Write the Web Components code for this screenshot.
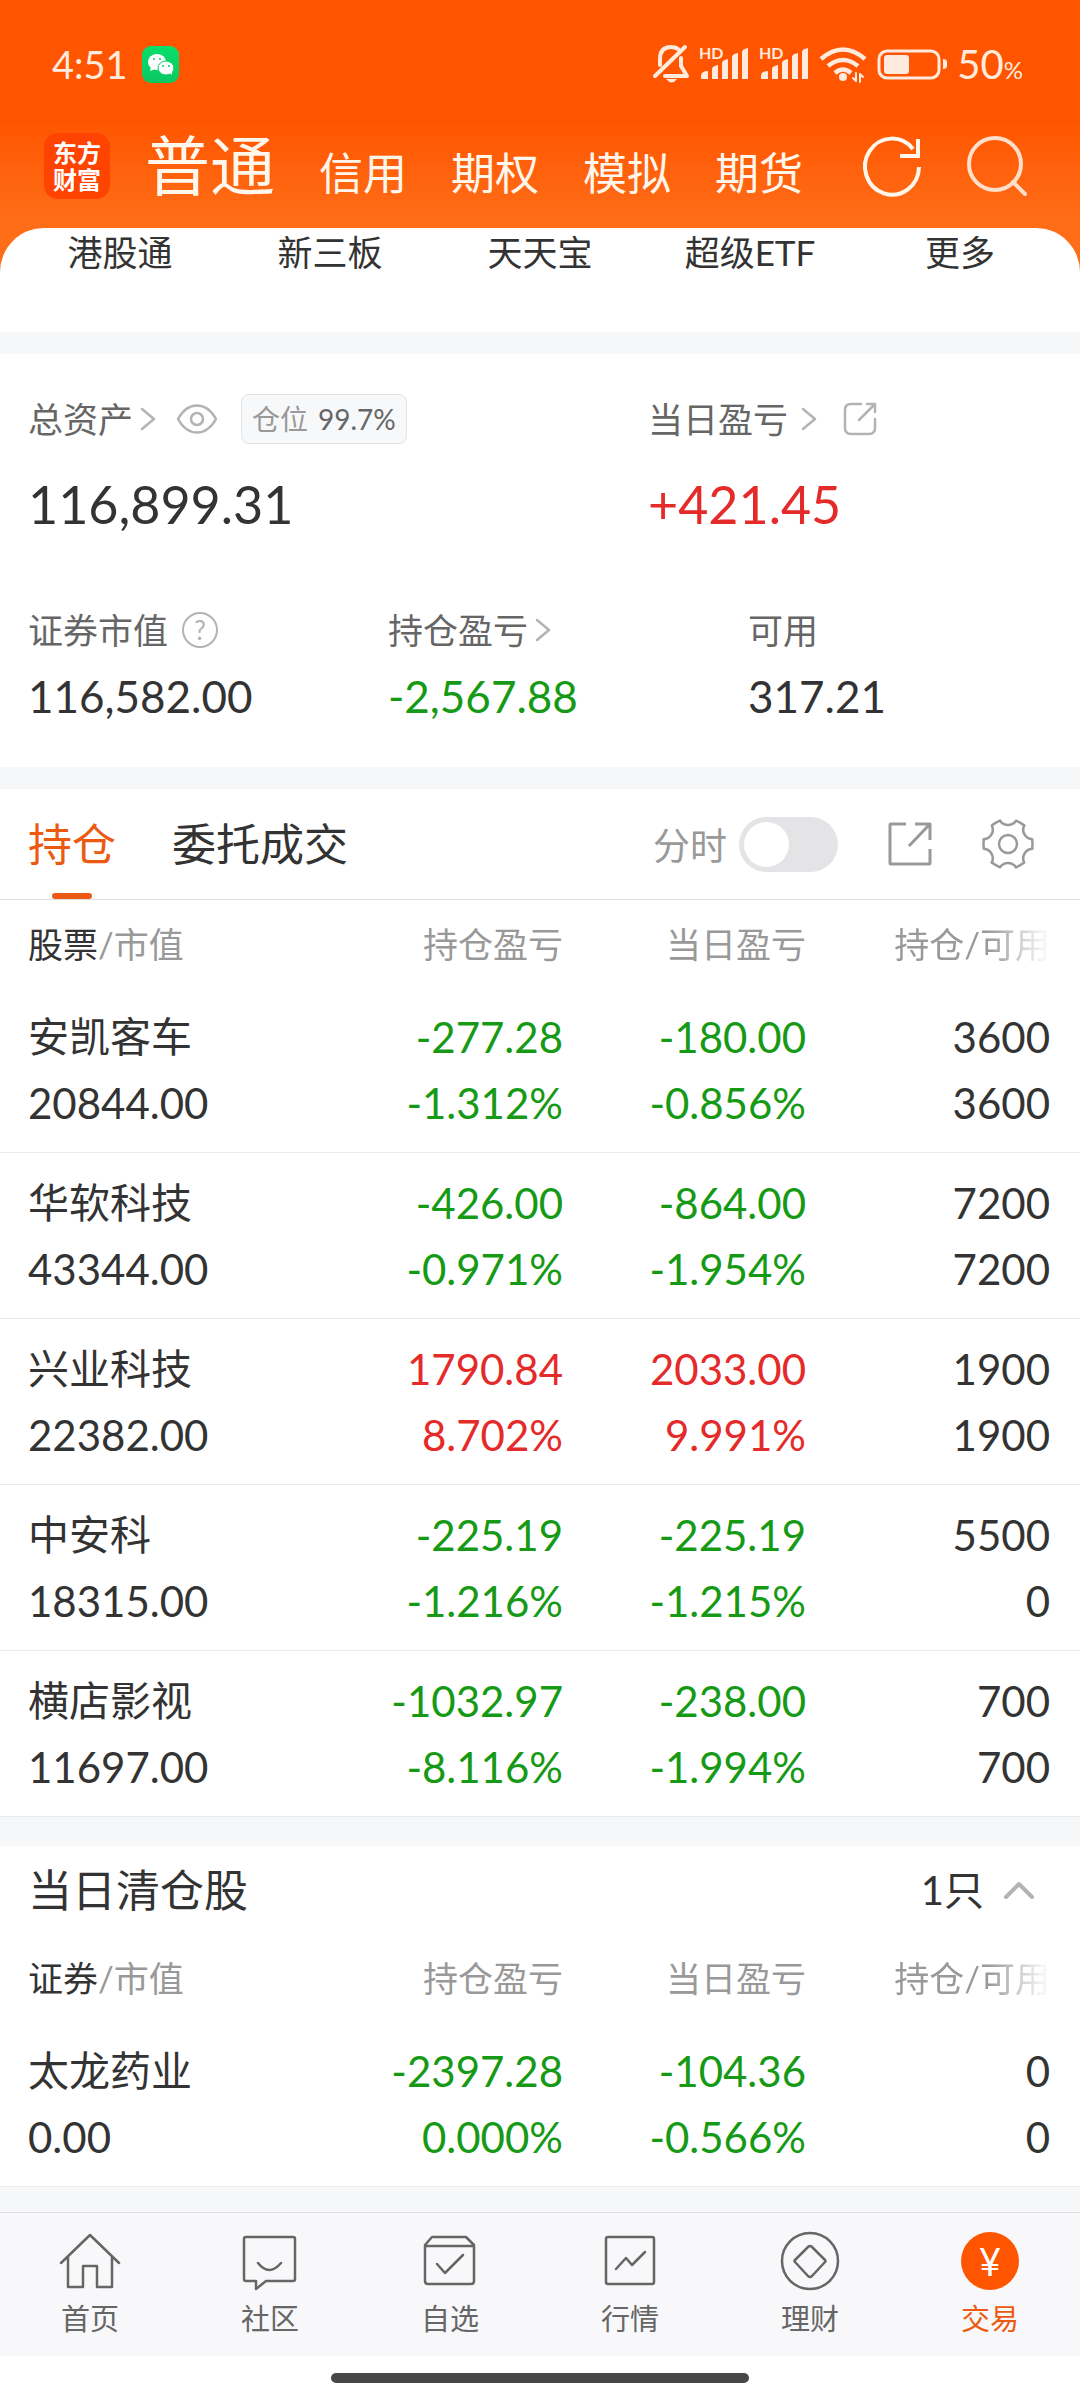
<!DOCTYPE html>
<html lang="zh-CN">
<head>
  <meta charset="utf-8">
  <meta name="viewport" content="width=device-width, initial-scale=1">
  <title>交易</title>
  <style>
    body {
      margin: 0;
      font-family: Lato, "Noto Sans CJK SC", sans-serif;
      color: #333;
      background: #fff;
    }

    trade-page {
      --band: #f6f7f9;
      --muted: #999;
      --label: #666;
      --up: #e52a2a;
      --down: #169a16;
      --accent: #eb5a10;
    }
  </style>
</head>
<body>
  <trade-page>
    <app-header slot="header">
      <status-bar time="4:51" battery="50"></status-bar>
    </app-header>
    <quick-links slot="header">
      <a href="#ggt">港股通</a>
      <a href="#xsb">新三板</a>
      <a href="#ttb">天天宝</a>
      <a href="#etf">超级ETF</a>
      <a href="#more">更多</a>
    </quick-links>
    <asset-summary></asset-summary>
    <section>
      <holding-tabs></holding-tabs>
      <holding-table id="holdings" label="股票"></holding-table>
    </section>
    <cleared-panel count="1">
      <holding-table id="cleared" label="证券"></holding-table>
    </cleared-panel>
    <bottom-nav slot="footer">
      <nav-item icon="home">首页</nav-item>
      <nav-item icon="community">社区</nav-item>
      <nav-item icon="watchlist">自选</nav-item>
      <nav-item icon="market">行情</nav-item>
      <nav-item icon="wealth">理财</nav-item>
      <nav-item icon="trade" active>交易</nav-item>
    </bottom-nav>
  </trade-page>

  <script>
    const gearTooth = [0, 60, 120, 180, 240, 300]
      .map(a => `<path transform="rotate(${a})" d="M-8 -23.3C-4 -17.6 4 -17.6 8 -23.3Q12.5 -21.5 16.2 -18.6"/>`)
      .join('');

    const signal = `<g fill="currentColor" stroke="none">
      <text x="0" y="12" font-size="16" font-weight="700">HD</text>
      <path d="M2 32v-3q0-5 7-5v8zM13 32V22q0-3 6-4v14zM23 32V16q0-3 6-4v20zM33 32V10q0-3 6-4v26zM43 32V5q0-3 6-4v31z"/></g>`;

    // [width, height, stroke width, shapes]
    const ICONS = {
      chevron: [14, 22, 2.5, '<path d="M1 1l12 10L1 21"/>'],
      up: [30, 18, 4, '<path d="M2 16L15 3l13 13"/>'],
      eye: [42, 30, 2.5, '<path d="M2 15C12-3 30-3 40 15C30 33 12 33 2 15z"/><circle cx="21" cy="15" r="6"/>'],
      export: [32, 32, 2.5, '<path d="M17 1H7Q1 1 1 7v18q0 6 6 6h18q6 0 6-6V16M15 17L30 2M23 1h8v8"/>'],
      share: [44, 44, 3, '<path d="M18 2H3q-1 0-1 1v38q0 1 1 1h38q1 0 1-1V27M21 24L41 3M27 2h15v16" stroke-linecap="butt"/>'],
      gear: [52, 52, 2.5, `<g transform="translate(26 26)">${gearTooth}<circle r="9"/></g>`],
      refresh: [60, 60, 4, '<path d="M57 31A27 28 0 1 1 51 13M56 3v17H38" stroke-linecap="butt" stroke-linejoin="miter"/>'],
      search: [60, 60, 4, '<circle cx="29" cy="28" r="26"/><path d="M47 46l12 12"/>'],
      mute: [36, 38, 4, '<path d="M2 31L32 2M7 20v-6C7 6 11 2 18 2q4 0 7 2M28 13v8l6 10H12"/><path d="M13 34h11q-5 7-11 0z" fill="currentColor" stroke="none"/>'],
      signal: [50, 34, 1, signal],
      wifi: [48, 37, 4.5, '<path d="M2 13Q24-6 46 13M9 20Q24 8 39 20M16 27Q24 20 32 27" stroke-linecap="butt"/><circle cx="24" cy="31" r="4" fill="currentColor" stroke="none"/><path d="M37 27v8l-3-3M41 36v-8l3 3" stroke-width="2"/>'],
      battery: [70, 30, 3, '<rect x="2" y="2" width="60" height="27" rx="8"/><g fill="currentColor" stroke="none"><rect x="7" y="6" width="25" height="19" rx="3"/><path d="M66 10q4 0 4 3v4q0 3-4 3z"/></g>'],
      wechat: [37, 37, 0, '<defs><linearGradient id="g" x2="0" y2="1"><stop stop-color="#08df6b"/><stop offset="1" stop-color="#0ac862"/></linearGradient></defs><rect width="37" height="37" rx="9" fill="url(#g)"/><g fill="#fff"><ellipse cx="15" cy="16" rx="9" ry="8"/><path d="M9 21l-1 4 5-2z"/><ellipse cx="24" cy="22" rx="8" ry="7" stroke="#09d266" stroke-width="1"/><path d="M27 26l3 3v-5z"/></g><g fill="#09d266"><circle cx="12" cy="13" r="1"/><circle cx="18" cy="13" r="1"/><circle cx="21" cy="20" r="1"/><circle cx="27" cy="20" r="1"/></g>'],
      home: [60, 60, 2.5, '<path d="M1 32L30 4l29 28M8 26v30h15V35h14v21h15V26"/>'],
      community: [60, 60, 2.5, '<path d="M6 6h47q2 0 2 2v40q0 2-2 2H26l-10 8v-8H6q-2 0-2-2V8q0-2 2-2zM18 32q11 14 23 0"/>'],
      watchlist: [60, 60, 2.5, '<path d="M5 14l7-8h34l8 8v36q0 3-3 3H8q-3 0-3-3zM5 15h49M17 33l8 9 18-18"/>'],
      market: [60, 60, 2.5, '<rect x="6" y="6" width="48" height="47" rx="2"/><path d="M16 38l10-11 6 7 13-13"/>'],
      wealth: [60, 60, 2.5, '<circle cx="30" cy="30" r="28"/><path d="M28 16q2-2 4 0l13 13q1 1 0 2L32 45q-2 2-4 0L15 31q-1-1 0-2z"/>'],
      trade: [60, 60, 0, '<circle cx="30" cy="30" r="29" fill="#f50"/><text x="30" y="45" text-anchor="middle" font-size="38" fill="#fff">¥</text>']
    };

    class UiIcon extends HTMLElement {
      connectedCallback() {
        const [w, h, stroke, shapes] = ICONS[this.getAttribute('name')];
        this.attachShadow({mode: 'open'}).innerHTML = `
          <style>
            :host {
              display: block;
              flex: none;
            }

            svg {
              display: block;
              overflow: visible;
            }
          </style>
          <svg width="${w}" height="${h}" viewBox="0 0 ${w} ${h}" fill="none" stroke="${stroke ? 'currentColor' : 'none'}"
            stroke-width="${stroke}" stroke-linecap="round" stroke-linejoin="round" aria-hidden="true">${shapes}</svg>
        `;
      }
    }

    class TradePage extends HTMLElement {
      connectedCallback() {
        this.attachShadow({mode: 'open'}).innerHTML = `
          <style>
            :host {
              display: flex;
              flex-direction: column;
              min-height: 100vh;
            }

            header {
              background: linear-gradient(#f50 120px, #ff6d18 220px);
            }

            main {
              flex: 1;
              display: flex;
              flex-direction: column;
              gap: 22px;
              padding: 22px 0 24px;
              background: var(--band);
            }

            ::slotted(section) {
              background: #fff;
            }
          </style>
          <header><slot name="header"></slot></header>
          <main><slot></slot></main>
          <slot name="footer"></slot>
        `;
      }
    }

    class StatusBar extends HTMLElement {
      connectedCallback() {
        this.attachShadow({mode: 'open'}).innerHTML = `
          <style>
            :host {
              display: flex;
              align-items: center;
              gap: 14px;
              height: 128px;
              padding: 0 57px 0 52px;
              color: #ffeade;
              font-size: 38px;
            }

            .icons {
              display: flex;
              align-items: center;
              gap: 10px;
              margin-left: auto;
              font-size: 40px;
            }

            small {
              font-size: 24px;
            }
          </style>
          <span>${this.getAttribute('time')}</span>
          <ui-icon name="wechat"></ui-icon>
          <div class="icons">
            <ui-icon name="mute"></ui-icon>
            <ui-icon name="signal"></ui-icon>
            <ui-icon name="signal"></ui-icon>
            <ui-icon name="wifi"></ui-icon>
            <ui-icon name="battery"></ui-icon>
            <span>${this.getAttribute('battery')}<small>%</small></span>
          </div>
        `;
      }
    }

    class AppHeader extends HTMLElement {
      connectedCallback() {
        this.attachShadow({mode: 'open'}).innerHTML = `
          <style>
            :host {
              display: block;
              color: #fff6ec;
            }

            .bar {
              display: flex;
              align-items: center;
              height: 76px;
              padding: 0 54px 24px 44px;
            }

            .logo {
              width: 66px;
              padding: 6px 0;
              border-radius: 14px;
              background: #ff4300;
              color: #fff;
              font-size: 24px;
              font-weight: 700;
              line-height: 27px;
              text-align: center;
            }

            nav {
              display: flex;
              align-items: baseline;
              gap: 44px;
              margin-left: 35px;
              padding-top: 6px;
              font-size: 44px;
              line-height: 76px;
              white-space: nowrap;
            }

            a {
              color: inherit;
              text-decoration: none;
            }

            a[aria-current] {
              font-size: 65px;
            }

            .actions {
              display: flex;
              gap: 44px;
              margin-left: auto;
            }

            button {
              padding: 0;
              border: 0;
              background: none;
              color: inherit;
            }

            .search {
              color: #ffdfc9;
            }
          </style>
          <slot></slot>
          <div class="bar">
            <div class="logo">东方<br>财富</div>
            <nav>
              <a href="#normal" aria-current="page">普通</a>
              <a href="#margin">信用</a>
              <a href="#options">期权</a>
              <a href="#paper">模拟</a>
              <a href="#futures">期货</a>
            </nav>
            <div class="actions">
              <button aria-label="刷新"><ui-icon name="refresh"></ui-icon></button>
              <button class="search" aria-label="搜索"><ui-icon name="search"></ui-icon></button>
            </div>
          </div>
        `;
      }
    }

    class QuickLinks extends HTMLElement {
      connectedCallback() {
        this.attachShadow({mode: 'open'}).innerHTML = `
          <style>
            :host {
              display: grid;
              grid-template-columns: repeat(5, 1fr);
              padding: 0 15px 56px;
              border-radius: 44px 44px 0 0;
              background: #fff;
              font-size: 35px;
              line-height: 48px;
              text-align: center;
            }

            ::slotted(a) {
              color: #333;
              text-decoration: none;
            }
          </style>
          <slot></slot>
        `;
      }
    }

    class AssetSummary extends HTMLElement {
      connectedCallback() {
        this.attachShadow({mode: 'open'}).innerHTML = `
          <style>
            :host {
              display: block;
              padding: 40px 0 38px;
              background: #fff;
            }

            dl {
              display: grid;
              margin: 0;
            }

            .total {
              grid-template-columns: 62fr 46fr;
              margin-bottom: 61px;
            }

            .detail {
              grid-template-columns: repeat(3, 1fr);
            }

            dl > div {
              padding-left: 28px;
            }

            dt {
              display: flex;
              align-items: center;
              gap: 8px;
              height: 50px;
              color: var(--label);
              font-size: 35px;
              line-height: 48px;
              white-space: nowrap;
            }

            dt.wide {
              gap: 14px;
            }

            dd {
              margin: 8px 0 0;
              font-size: 44px;
              line-height: 66px;
            }

            .total dd {
              margin-top: 20px;
              font-size: 52px;
              line-height: 80px;
            }

            .up {
              color: var(--up);
            }

            .down {
              color: var(--down);
            }

            ui-icon {
              color: #b3b3b3;
            }

            button {
              padding: 0;
              border: 0;
              background: none;
              font: inherit;
            }

            .eye {
              margin: 0 15px 0 13px;
            }

            .export {
              margin-left: 14px;
            }

            .help {
              width: 36px;
              height: 36px;
              border: 2px solid #b3b3b3;
              border-radius: 50%;
              color: #b3b3b3;
              font-size: 26px;
              line-height: 32px;
            }

            .badge {
              display: flex;
              gap: 10px;
              padding: 0 10px;
              border: 1px solid #e3e3e6;
              border-radius: 8px;
              background: #f7f8fa;
              font-size: 28px;
              line-height: 48px;
            }

            .badge span {
              color: var(--muted);
            }
          </style>
          <dl class="total">
            <div>
              <dt>总资产<ui-icon name="chevron"></ui-icon>
                <button class="eye" aria-label="隐藏金额"><ui-icon name="eye"></ui-icon></button>
                <div class="badge"><span>仓位</span>99.7%</div>
              </dt>
              <dd>116,899.31</dd>
            </div>
            <div>
              <dt class="wide">当日盈亏<ui-icon name="chevron"></ui-icon>
                <button class="export" aria-label="分享"><ui-icon name="export"></ui-icon></button>
              </dt>
              <dd class="up">+421.45</dd>
            </div>
          </dl>
          <dl class="detail">
            <div>
              <dt class="wide">证券市值<button class="help" aria-label="说明">?</button></dt>
              <dd>116,582.00</dd>
            </div>
            <div>
              <dt>持仓盈亏<ui-icon name="chevron"></ui-icon></dt>
              <dd class="down">-2,567.88</dd>
            </div>
            <div>
              <dt>可用</dt>
              <dd>317.21</dd>
            </div>
          </dl>
        `;
      }
    }

    class HoldingTabs extends HTMLElement {
      connectedCallback() {
        this.attachShadow({mode: 'open'}).innerHTML = `
          <style>
            :host {
              display: flex;
              align-items: center;
              gap: 56px;
              height: 110px;
              padding: 0 46px 0 28px;
              border-bottom: 1px solid #dedede;
              color: var(--muted);
            }

            button {
              padding: 0;
              border: 0;
              background: none;
              color: inherit;
              font: inherit;
            }

            .tab {
              height: 110px;
              color: #333;
              font-size: 44px;
              line-height: 108px;
              white-space: nowrap;
            }

            /* the marker sits over the bottom edge of the tab */
            .tab[aria-selected="true"] {
              position: relative;
              color: var(--accent);
            }

            .tab[aria-selected="true"]::after {
              content: "";
              position: absolute;
              bottom: 0;
              left: 24px;
              right: 24px;
              height: 6px;
              border-radius: 3px;
              background: var(--accent);
            }

            .tools {
              display: flex;
              align-items: center;
              gap: 50px;
              margin-left: auto;
            }

            label {
              display: flex;
              align-items: center;
              gap: 12px;
              font-size: 37px;
            }

            input {
              appearance: none;
              width: 99px;
              height: 55px;
              margin: 0;
              padding: 5px;
              border-radius: 28px;
              background: #e4e4e6;
            }

            input::before {
              content: "";
              display: block;
              width: 45px;
              height: 45px;
              border-radius: 50%;
              background: #fff;
            }

            input:checked {
              background: var(--accent);
            }

            input:checked::before {
              margin-left: auto;
            }
          </style>
          <button class="tab" role="tab" aria-selected="true">持仓</button>
          <button class="tab" role="tab" aria-selected="false">委托成交</button>
          <div class="tools">
            <label>分时<input type="checkbox" role="switch"></label>
            <button aria-label="分享"><ui-icon name="share"></ui-icon></button>
            <button aria-label="设置"><ui-icon name="gear"></ui-icon></button>
          </div>
        `;
      }
    }

    class HoldingTable extends HTMLElement {
      constructor() {
        super();
        this.attachShadow({mode: 'open'});
        this._rows = [];
      }

      connectedCallback() {
        this.render();
      }

      set rows(rows) {
        this._rows = rows;
        this.render();
      }

      row([name, value, profit, rate, dayProfit, dayRate, held, usable]) {
        const trend = v => v.startsWith('-') || v === '0.000%' ? 'down' : 'up';
        return `
          <tr>
            <th scope="row"><div class="name">${name}</div>${value}</th>
            <td class="${trend(rate)}">${profit}<br>${rate}</td>
            <td class="${trend(dayRate)}">${dayProfit}<br>${dayRate}</td>
            <td>${held}<br>${usable}</td>
          </tr>`;
      }

      render() {
        this.shadowRoot.innerHTML = `
          <style>
            :host {
              display: block;
              background: #fff;
            }

            table {
              width: 100%;
              table-layout: fixed;
              border-collapse: separate;
              border-spacing: 0;
            }

            th,
            td {
              padding: 0;
              font-weight: 400;
              text-align: right;
              white-space: nowrap;
            }

            thead th {
              height: 87px;
              color: var(--muted);
              font-size: 35px;
              line-height: 48px;
            }

            thead b {
              color: #333;
              font-weight: 400;
            }

            tbody th,
            tbody td {
              padding: 17px 0 16px;
              border-bottom: 1px solid #ebebeb;
              font-size: 42px;
              line-height: 66px;
            }

            th:first-child {
              padding-left: 28px;
              text-align: left;
            }

            th:last-child,
            td:last-child {
              padding-right: 30px;
            }

            .value {
              width: 243px;
            }

            .amount {
              width: 274px;
            }

            .name {
              font-size: 41px;
            }

            .fade {
              -webkit-mask-image: linear-gradient(to right, #000 60%, rgba(0, 0, 0, .1) 95%);
              mask-image: linear-gradient(to right, #000 60%, rgba(0, 0, 0, .1) 95%);
            }

            .up {
              color: var(--up);
            }

            .down {
              color: var(--down);
            }
          </style>
          <table>
            <colgroup>
              <col>
              <col class="value">
              <col class="value">
              <col class="amount">
            </colgroup>
            <thead>
              <tr>
                <th scope="col"><b>${this.getAttribute('label')}</b>/市值</th>
                <th scope="col">持仓盈亏</th>
                <th scope="col">当日盈亏</th>
                <th scope="col"><span class="fade">持仓/可用</span></th>
              </tr>
            </thead>
            <tbody>${this._rows.map(this.row).join('')}</tbody>
          </table>
        `;
      }
    }

    class ClearedPanel extends HTMLElement {
      connectedCallback() {
        this.attachShadow({mode: 'open'}).innerHTML = `
          <style>
            :host {
              display: block;
              margin-top: 7px;
              background: #fff;
            }

            header {
              display: flex;
              align-items: center;
              justify-content: space-between;
              height: 88px;
              padding: 0 46px 0 28px;
              line-height: 60px;
            }

            h2 {
              margin: 0;
              font-size: 44px;
              font-weight: 400;
            }

            button {
              display: flex;
              align-items: center;
              gap: 20px;
              padding: 0;
              border: 0;
              background: none;
              color: #333;
              font: inherit;
              font-size: 40px;
            }

            ui-icon {
              color: #b3b3b3;
            }
          </style>
          <header>
            <h2>当日清仓股</h2>
            <button aria-expanded="true">${this.getAttribute('count')}只<ui-icon name="up"></ui-icon></button>
          </header>
          <slot></slot>
        `;
      }
    }

    class NavItem extends HTMLElement {
      connectedCallback() {
        this.attachShadow({mode: 'open'}).innerHTML = `
          <style>
            :host {
              display: block;
              color: #666;
            }

            :host([active]) {
              color: var(--accent);
            }

            a {
              display: flex;
              flex-direction: column;
              align-items: center;
              gap: 6px;
              color: inherit;
              font-size: 29px;
              line-height: 44px;
              text-decoration: none;
            }
          </style>
          <a href="#${this.getAttribute('icon')}">
            <ui-icon name="${this.getAttribute('icon')}"></ui-icon>
            <span><slot></slot></span>
          </a>
        `;
      }
    }

    class BottomNav extends HTMLElement {
      connectedCallback() {
        this.attachShadow({mode: 'open'}).innerHTML = `
          <style>
            :host {
              display: block;
            }

            nav {
              display: grid;
              grid-template-columns: repeat(6, 1fr);
              padding: 18px 0 15px;
              border-top: 1px solid #dfe0e2;
              background: #f8f8fa;
            }

            .gesture {
              display: flex;
              align-items: center;
              justify-content: center;
              height: 44px;
            }

            .gesture::before {
              content: "";
              width: 418px;
              height: 10px;
              border-radius: 5px;
              background: #474747;
            }
          </style>
          <nav><slot></slot></nav>
          <div class="gesture"></div>
        `;
      }
    }

    customElements.define('ui-icon', UiIcon);
    customElements.define('trade-page', TradePage);
    customElements.define('status-bar', StatusBar);
    customElements.define('app-header', AppHeader);
    customElements.define('quick-links', QuickLinks);
    customElements.define('asset-summary', AssetSummary);
    customElements.define('holding-tabs', HoldingTabs);
    customElements.define('holding-table', HoldingTable);
    customElements.define('cleared-panel', ClearedPanel);
    customElements.define('nav-item', NavItem);
    customElements.define('bottom-nav', BottomNav);

    document.querySelector('#holdings').rows = [
      ['安凯客车', '20844.00', '-277.28', '-1.312%', '-180.00', '-0.856%', '3600', '3600'],
      ['华软科技', '43344.00', '-426.00', '-0.971%', '-864.00', '-1.954%', '7200', '7200'],
      ['兴业科技', '22382.00', '1790.84', '8.702%', '2033.00', '9.991%', '1900', '1900'],
      ['中安科', '18315.00', '-225.19', '-1.216%', '-225.19', '-1.215%', '5500', '0'],
      ['横店影视', '11697.00', '-1032.97', '-8.116%', '-238.00', '-1.994%', '700', '700']
    ];
    document.querySelector('#cleared').rows = [
      ['太龙药业', '0.00', '-2397.28', '0.000%', '-104.36', '-0.566%', '0', '0']
    ];
  </script>
</body>
</html>
